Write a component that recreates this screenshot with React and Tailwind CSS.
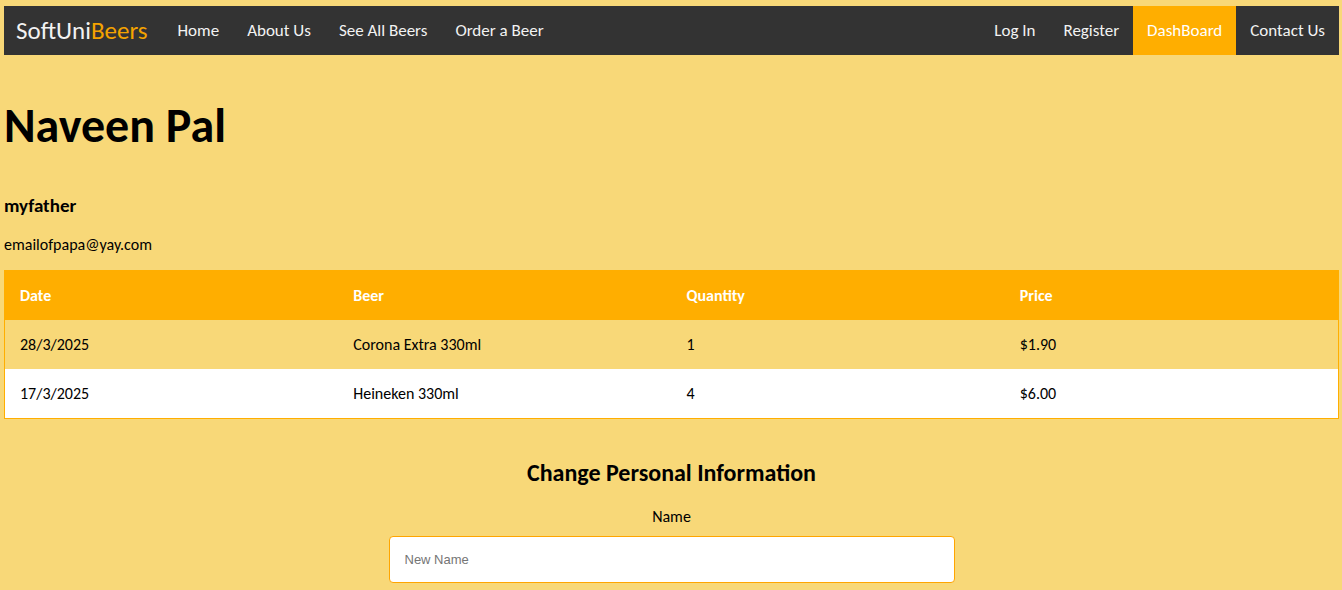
const leftLinks = ["Home", "About Us", "See All Beers", "Order a Beer"];
const rightLinks = ["Log In", "Register", "DashBoard", "Contact Us"];

const columns = ["Date", "Beer", "Quantity", "Price"];
const orders = [
  ["28/3/2025", "Corona Extra 330ml", "1", "$1.90"],
  ["17/3/2025", "Heineken 330ml", "4", "$6.00"],
];

function NavLink({ label, active }) {
  return (
    <li>
      <a
        href="#"
        aria-current={active ? "page" : undefined}
        className={
          active
            ? "block bg-[#ffae00] px-3.5 py-3 text-[17px] leading-[25px] text-white"
            : "block px-3.5 py-3 text-[17px] leading-[25px] text-[#f2f2f2] hover:bg-[#555]"
        }
      >
        {label}
      </a>
    </li>
  );
}

function NavBar() {
  return (
    <nav className="flex items-stretch justify-between bg-[#333] whitespace-nowrap">
      <div className="flex">
        <a href="#" className="flex items-center pr-4 pl-3 text-[25px] leading-[25px] text-[#f2f2f2]">
          SoftUni<span className="text-[#f5a300]">Beers</span>
        </a>
        <ul className="flex">
          {leftLinks.map((label) => (
            <NavLink key={label} label={label} />
          ))}
        </ul>
      </div>
      <ul className="flex">
        {rightLinks.map((label) => (
          <NavLink key={label} label={label} active={label === "DashBoard"} />
        ))}
      </ul>
    </nav>
  );
}

function OrdersTable() {
  return (
    <table className="w-full table-fixed border-separate border-spacing-0 border border-[#ffae00] text-left text-base leading-[19px]">
      <thead>
        <tr className="bg-[#ffae00] text-white">
          {columns.map((column) => (
            <th key={column} className="px-[15px] py-[15px] font-bold">
              {column}
            </th>
          ))}
        </tr>
      </thead>
      <tbody>
        {orders.map((order) => (
          <tr key={order[0]} className="even:bg-white">
            {order.map((value, i) => (
              <td key={columns[i]} className="px-[15px] py-[15px]">
                {value}
              </td>
            ))}
          </tr>
        ))}
      </tbody>
    </table>
  );
}

export default function App() {
  return (
    <div className="min-h-screen bg-[#f8d878] pt-1.5 pr-[3px] pl-1 font-['Carlito','Calibri','Lato',sans-serif] text-black">
      <NavBar />
      <main>
        <h1 className="mt-11 text-[48px] leading-[54px] font-bold">Naveen Pal</h1>
        <h3 className="mt-[42px] text-[19px] leading-[22px] font-bold">myfather</h3>
        <p className="mt-[17px] mb-[15px] text-base leading-[21px]">emailofpapa@yay.com</p>
        <OrdersTable />
        <form className="mt-10 flex flex-col items-center pb-1.5">
          <h2 className="text-2xl leading-7 font-bold">Change Personal Information</h2>
          <label htmlFor="name" className="mt-5 text-base leading-5">
            Name
          </label>
          <input
            id="name"
            type="text"
            placeholder="New Name"
            className="mt-[9px] h-[47px] w-[566px] max-w-full rounded border border-[#ffa500] bg-white px-[15px] font-['Liberation_Sans',Arial,sans-serif] text-[13px] placeholder:text-[#757575]"
          />
        </form>
      </main>
    </div>
  );
}
